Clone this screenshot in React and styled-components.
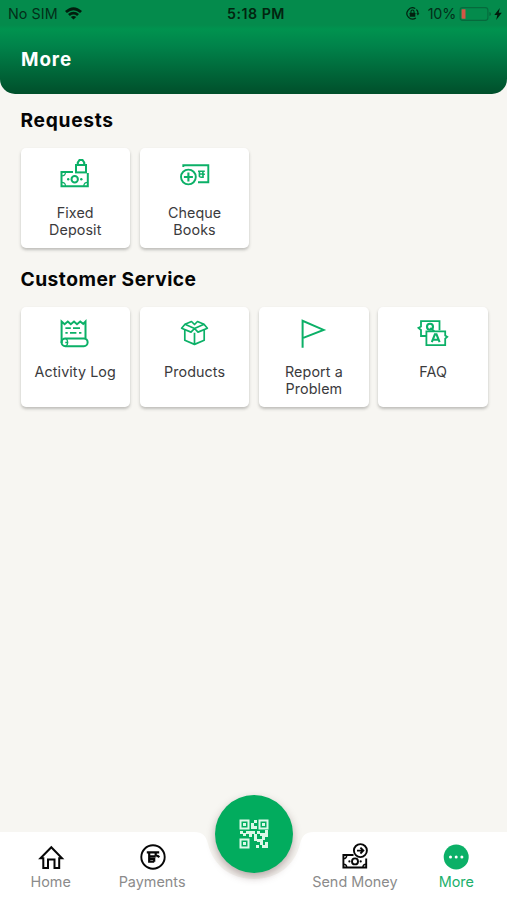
import React from "react";
import styled, { createGlobalStyle } from "styled-components";

const GREEN = "#0bb067";

const GlobalStyle = createGlobalStyle`
  * { box-sizing: border-box; }
  body { margin: 0; background: #f7f6f2; font-family: Inter, "Liberation Sans", sans-serif; }
`;

const Screen = styled.div`
  width: 507px;
  height: 900px;
  display: flex;
  flex-direction: column;
  overflow: hidden;
  background: #f7f6f2;
`;

const Header = styled.header`
  height: 94px;
  flex: none;
  border-radius: 0 0 15px 15px;
  background: linear-gradient(#048b4c 0, #048b4c 25px, #00934f 29px, #00834a 46px, #004f2b 94px);
`;

const StatusBar = styled.div`
  height: 27px;
  display: grid;
  grid-template-columns: 1fr auto 1fr;
  align-items: center;
  padding: 0 5px 0 8px;
  color: #032e19;
  font-size: 14.3px;
  line-height: 27px;
`;

const StatusGroup = styled.div`
  display: flex;
  align-items: center;
  justify-content: ${(p) => (p.$end ? "flex-end" : "flex-start")};
  letter-spacing: ${(p) => (p.$end ? "-0.2px" : "0.05px")};
`;

const Percent = styled.span`
  margin-left: 9px;
`;

const Clock = styled.div`
  font-weight: 600;
  font-size: 14.2px;
  letter-spacing: 0.5px;
  padding-left: 2px;
  color: #02240f;
`;

const Icon = styled.svg`
  display: block;
  flex: none;
  overflow: visible;
  width: ${(p) => p.$w}px;
  height: ${(p) => p.$h || p.$w}px;
  margin-left: ${(p) => p.$ml || 0}px;
`;

const Title = styled.h1`
  margin: 20px 0 0 21px;
  color: #fff;
  font-size: 18.8px;
  line-height: 25px;
  font-weight: 700;
  letter-spacing: 0.9px;
`;

const Content = styled.main`
  flex: 1;
  padding: 13px 19px 0 20.5px;
`;

const Section = styled.section`
  height: 159px;
`;

const Heading = styled.h2`
  margin: 0 0 15px;
  color: #050505;
  font-size: 19.2px;
  line-height: 26px;
  font-weight: 700;
  letter-spacing: ${(p) => p.$track}px;
`;

const CardGrid = styled.div`
  display: grid;
  grid-template-columns: repeat(4, 109.5px);
  justify-content: space-between;
`;

const Card = styled.button`
  height: 100px;
  border: 0;
  border-radius: 5px;
  padding: 11px 4px 0;
  background: #fff;
  box-shadow: 0 2px 3px rgba(60, 60, 55, 0.3);
  display: flex;
  flex-direction: column;
  align-items: center;
  color: ${GREEN};
`;

const CardLabel = styled.span`
  margin-top: 15px;
  color: #3b3b3d;
  font: 400 14.3px/17px Inter, sans-serif;
  letter-spacing: 0.1px;
  text-align: center;
  white-space: pre-line;
`;

const TabBar = styled.nav`
  height: 68px;
  flex: none;
  display: grid;
  grid-template-columns: minmax(0, 1fr) 120px minmax(0, 1fr);
  position: relative;
`;

const Side = styled.div`
  background: #fff;
  display: flex;
  justify-content: ${(p) => (p.$end ? "flex-end" : "flex-start")};
`;

const Tab = styled.button`
  flex: none;
  width: 101.4px;
  border: 0;
  background: none;
  padding: 12px 0 0;
  display: flex;
  flex-direction: column;
  align-items: center;
  gap: 3px;
  color: ${(p) => (p.$active ? GREEN : "#070707")};
`;

const TabLabel = styled.span`
  color: ${(p) => (p.$active ? "#1cb06c" : "#8b8b8b")};
  font: 400 14.4px/18px Inter, sans-serif;
  white-space: nowrap;
`;

const ScanButton = styled.button`
  position: absolute;
  left: 215px;
  top: -37px;
  width: 78px;
  height: 78px;
  border: 0;
  border-radius: 50%;
  padding: 0;
  display: flex;
  align-items: center;
  justify-content: center;
  background: #02ac5e;
  color: #dcf8e7;
  box-shadow: 0 4px 8px rgba(70, 35, 40, 0.36);
`;

const line = { fill: "none", stroke: "currentColor" };

function Wifi() {
  return (
    <Icon $w={17} $h={13} $ml={7} viewBox="0 0 17 13" fill="#021d0d">
      <path d="M0 4.1Q8.5-3.5 17 4.1L15.1 6Q8.5.4 1.9 6Z" />
      <path d="M3 7.1Q8.5 2.4 14 7.1L12.1 9Q8.5 6.1 4.9 9Z" />
      <path d="M5.8 10Q8.5 7.8 11.2 10L8.5 12.6Z" />
    </Icon>
  );
}

function RotationLock() {
  return (
    <Icon $w={13} viewBox="0 0 14 14" {...line} strokeWidth="1.3" color="#03200f">
      <path d="M10 1.7A6 6 0 1 0 10.6 11.8M11.2 2.7A6 6 0 0 1 13 7" />
      <path d="M11.2 6.8h3.2l-1.6 2.3Z" fill="currentColor" stroke="none" />
      <rect x="4" y="6.2" width="6" height="4.4" rx=".5" fill="currentColor" stroke="none" />
      <path d="M5.3 6.5V5a1.7 1.7 0 0 1 3.4 0v1.5" strokeWidth="1.1" />
    </Icon>
  );
}

function Battery() {
  return (
    <Icon $w={32} $h={14} $ml={4} viewBox="0 0 32 14">
      <rect x=".1" y=".6" width="27.8" height="12.8" rx="2.6" fill="none" stroke="#066a3c" strokeWidth="1.1" />
      <path d="M2.3 2.2h3.2v9.6H2.3q-.7 0-.7-.8V3q0-.8.7-.8Z" fill="#d45746" />
      <path d="M29.5 5q1.4.6 1.4 2t-1.4 2Z" fill="#075c35" />
    </Icon>
  );
}

function Bolt() {
  return (
    <Icon $w={8} $h={12} $ml={2} viewBox="0 0 8 12" fill="#021b0c">
      <path d="M5.8 0 .3 7h3L2.2 12 7.8 4.8H4.7Z" />
    </Icon>
  );
}

function DepositIcon() {
  return (
    <Icon $w={30} viewBox="0 0 30 30" {...line} strokeWidth="2">
      <path d="M13 13H1.5v14.2h26.3V14" />
      <path d="M1.5 17q4 0 4-4M1.5 23.4q4 0 4 3.8M27.8 23.4q-4 0-4 3.8" strokeWidth="1.2" />
      <circle cx="14.7" cy="20.3" r="3.2" />
      <circle cx="8.2" cy="20.3" r="1.2" fill="currentColor" stroke="none" />
      <circle cx="21.3" cy="20.3" r="1.2" fill="currentColor" stroke="none" />
      <rect x="16" y="6" width="10" height="7.4" />
      <path d="M17.8 6V3.5L19.5 1h3l1.7 2.5V6" strokeWidth="2.1" />
    </Icon>
  );
}

function ChequeIcon() {
  return (
    <Icon $w={30} viewBox="0 0 30 30" {...line} strokeWidth="1.9">
      <path d="M3.3 8V6.2h25v17H18" />
      <circle cx="8.4" cy="18" r="7.4" />
      <path d="M8.4 13.5v9M3.9 18h9" strokeWidth="2.1" />
      <path d="M18 12.3h6.8M19.4 12.3v5q0 1 3.6 1V15h-3M22.9 12.5v2.8h2" strokeWidth="1.6" />
    </Icon>
  );
}

function LogIcon() {
  return (
    <Icon $w={30} viewBox="0 0 30 30" {...line} strokeWidth="2">
      <path d="M1.6 25V3.5l3 2.7 3.2-2.7 3 2.7L14 3.5l3 2.7 3.2-2.7 3 2.4 2.3-2.4V20" />
      <path d="M5.4 10.2h5.4M13 10.2h7M5.4 14.8h2.3M10 14.8h6.4M19 14.8h2.4" strokeWidth="1.8" />
      <rect x="1.6" y="20.4" width="26" height="7.8" rx="3.7" />
      <path d="M5.5 20.4q2.2 1.2 2.2 4t-2.2 3.8M7.7 24.5H5.3" strokeWidth="1.4" />
    </Icon>
  );
}

function BoxIcon() {
  return (
    <Icon $w={30} viewBox="0 0 30 30" {...line} strokeWidth="1.7" strokeLinejoin="round">
      <path d="M14.5 10.5 5 6.3 1.6 10.2 11 14.1l3.5-3.6L24 6.3l3.4 3.9-9.4 3.9-3.5-3.6Z" />
      <path d="M4.8 11.7v10.5l9.7 4.2 9.7-4.2V11.7M14.5 14.7v11.7" />
      <path d="m5 6.3 6.5-2.8 3 3 3-3L24 6.3" />
    </Icon>
  );
}

function FlagIcon() {
  return (
    <Icon $w={30} viewBox="0 0 30 30" {...line} strokeWidth="2">
      <path d="M3.6 29.8V2.8l21 9.1-21 8.2" />
    </Icon>
  );
}

function FaqIcon() {
  return (
    <Icon $w={30} viewBox="0 0 30 30" {...line} strokeWidth="1.8">
      <path d="M8 18H3v-6L.5 9.9 3 8.5V3.2h18.5v9" />
      <circle cx="12" cy="8.8" r="3" strokeWidth="2.1" />
      <path d="m12.3 10 4 3.2" />
      <path d="M8.4 13.4h18.8v4.2l2 1.2-2 1.8v6.6H8.4Z" />
      <path d="m13.8 24.2 3.1-7.8h1.6l3.1 7.8M15.2 21.7h5.3" strokeWidth="2.1" />
    </Icon>
  );
}

function HomeIcon() {
  return (
    <Icon $w={26} viewBox="0 0 26 26" {...line} strokeWidth="2">
      <path d="M2.5 14.2 13.3 3.2 24 14.2h-2.8v9.8h-4.7v-8.6H10V24H5.3v-9.8Z" />
    </Icon>
  );
}

function PaymentsIcon() {
  return (
    <Icon $w={26} $ml={1} viewBox="0 0 26 26" {...line} strokeWidth="1.9">
      <circle cx="13" cy="13" r="11.7" />
      <path d="M6.8 8.4h12.4M9.2 8.5v3.8h6.6M15.7 8.5v3.3M9.2 12.5v5.2h5M10 14.9h4.2v2.8M16.2 12.2q1.8-.8 3 1.2" strokeWidth="2.2" />
    </Icon>
  );
}

function SendIcon() {
  return (
    <Icon $w={26} viewBox="0 0 26 26" {...line} strokeWidth="1.9">
      <path d="M11.5 11H1.4v12.5h22.8v-9" />
      <path d="M1.4 14.6q3.3 0 3.3-3.4M1.4 20.2q3.3 0 3.3 3.2M24.2 20.2q-3.3 0-3.3 3.2" strokeWidth="1.5" />
      <circle cx="13" cy="17.4" r="3" />
      <circle cx="7.4" cy="17.4" r="1.1" fill="currentColor" stroke="none" />
      <circle cx="18.7" cy="17.4" r="1.1" fill="currentColor" stroke="none" />
      <circle cx="18.4" cy="6.6" r="6.5" fill="#fff" />
      <path d="M15 6.6h6M18.4 3.7l2.9 2.9-2.9 2.9" strokeWidth="1.9" />
    </Icon>
  );
}

function MoreIcon() {
  return (
    <Icon $w={26} viewBox="0 0 26 26">
      <circle cx="13.2" cy="13" r="12.5" fill={GREEN} />
      <g fill="#fff">
        <circle cx="7.5" cy="13" r="1.5" />
        <circle cx="13.2" cy="13" r="1.5" />
        <circle cx="18.9" cy="13" r="1.5" />
      </g>
    </Icon>
  );
}

function QrIcon() {
  return (
    <Icon $w={30} viewBox="0 0 30 30" {...line} strokeWidth="2">
      <path d="M1.5 1.5h8v8h-8ZM20.5 1.5h8v8h-8ZM1.5 20.5h8v8h-8Z" />
      <path
        fill="currentColor"
        stroke="none"
        d="M4 4h3v3H4ZM23 4h3v3h-3ZM4 23h3v3H4ZM15 1h3v3h-3ZM12 4h3v3h3v3h-6ZM1 12h3v3H1ZM4 14h3v3H4ZM7 12h9v3h-3v3h-3v-3H7ZM15 15h3v7h-3ZM18 12h3v3h-3ZM21 14h5v3h-5ZM26 11h3v7h-3v3h-3v-4h3ZM18 20h5v3h-5ZM17 26h3v3h-3ZM21 21h3v5h-3ZM23 26h6v3h-6ZM26 23h3v3h-3Z"
      />
    </Icon>
  );
}

function Notch() {
  return (
    <Icon $w={120} $h={68} viewBox="0 0 120 68" preserveAspectRatio="none" fill="#fff">
      <path d="M0 0C9 0 12 4 14 12C19 33 36 47 60 47C84 47 101 33 106 12C108 4 111 0 120 0V68H0Z" />
    </Icon>
  );
}

const requests = [
  { label: "Fixed\nDeposit", Art: DepositIcon },
  { label: "Cheque\nBooks", Art: ChequeIcon },
];
const services = [
  { label: "Activity Log", Art: LogIcon },
  { label: "Products", Art: BoxIcon },
  { label: "Report a\nProblem", Art: FlagIcon },
  { label: "FAQ", Art: FaqIcon },
];

function Cards({ items }) {
  return (
    <CardGrid>
      {items.map(({ label, Art }) => (
        <Card key={label}>
          <Art />
          <CardLabel>{label}</CardLabel>
        </Card>
      ))}
    </CardGrid>
  );
}

export default function App() {
  return (
    <Screen>
      <GlobalStyle />
      <Header>
        <StatusBar>
          <StatusGroup>
            No SIM
            <Wifi />
          </StatusGroup>
          <Clock>5:18 PM</Clock>
          <StatusGroup $end>
            <RotationLock />
            <Percent>10%</Percent>
            <Battery />
            <Bolt />
          </StatusGroup>
        </StatusBar>
        <Title>More</Title>
      </Header>
      <Content>
        <Section>
          <Heading $track={0.7}>Requests</Heading>
          <Cards items={requests} />
        </Section>
        <Section>
          <Heading $track={0.48}>Customer Service</Heading>
          <Cards items={services} />
        </Section>
      </Content>
      <TabBar>
        <Side>
          <Tab>
            <HomeIcon />
            <TabLabel>Home</TabLabel>
          </Tab>
          <Tab>
            <PaymentsIcon />
            <TabLabel>Payments</TabLabel>
          </Tab>
        </Side>
        <Notch />
        <Side $end>
          <Tab>
            <SendIcon />
            <TabLabel>Send Money</TabLabel>
          </Tab>
          <Tab $active>
            <MoreIcon />
            <TabLabel $active>More</TabLabel>
          </Tab>
        </Side>
        <ScanButton>
          <QrIcon />
        </ScanButton>
      </TabBar>
    </Screen>
  );
}
